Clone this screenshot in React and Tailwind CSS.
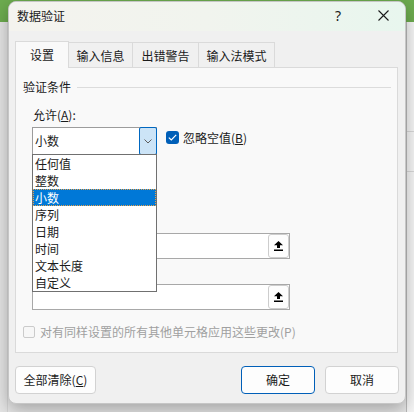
import { useState } from 'react'

const allowItems = ['任何值', '整数', '小数', '序列', '日期', '时间', '文本长度', '自定义']

// small upload/collapse button inside the range boxes
const RangeButton = () => (
  <div className="w-[21px] h-full rounded-[3px] border border-[#cdcdcd] bg-[#fdfdfd] flex items-center justify-center">
    <svg width="9" height="10" viewBox="0 0 9 10">
      <path d="M4.5 0 L9 4.2 H6 V7 H3 V4.2 H0 Z" fill="#000" />
      <rect x="0" y="8.5" width="9" height="1.5" fill="#000" />
    </svg>
  </div>
)

const RangeBox = ({ className = '' }) => (
  <div className={`ml-[16px] w-[258px] h-[26px] border border-[#a8a8a8] bg-white flex justify-end ${className}`}>
    <RangeButton />
  </div>
)

const DialogButton = ({ children, primary, className = '' }) => (
  <button
    className={`h-[28px] rounded-[4px] border bg-[#fdfdfd] text-[12px] leading-[16px] text-[#1b1b1b] flex items-center justify-center ${
      primary ? 'border-[#005fb8]' : 'border-[#d2d2d2]'
    } ${className}`}
  >
    {children}
  </button>
)

export default function App() {
  const [selected] = useState(2)
  const tabs = ['输入信息', '出错警告', '输入法模式']
  const tabWidths = ['w-[64px]', 'w-[66px]', 'w-[76px]']

  return (
    <div className="relative w-[414px] h-[412px] overflow-hidden bg-[#e9e9e9] font-['Noto_Sans_CJK_SC',sans-serif] text-[#1b1b1b]">
      {/* excel window behind the dialog */}
      <div className="h-[22px] bg-[#6dac4f]" />
      <div className="flex h-[390px]">
        <div className="w-[8px] bg-[#e6e6e6] border-r border-[#d8d8d8]" />
        <div className="flex-1" />
        <div className="w-[8px] bg-[#f7f7f7] border-l border-[#bcbcbc] flex flex-col">
          <div className="h-[110px] border-b border-[#d9d9d9]" />
          <div className="h-[40px] border-b border-[#d9d9d9]" />
        </div>
      </div>

      {/* dialog */}
      <div className="absolute left-[8px] top-[1px] w-[398px] h-[403px] rounded-[8px] border border-[#c6c6c6] bg-[#f0f0f0] shadow-[0_6px_18px_rgba(0,0,0,0.3)] overflow-hidden flex flex-col">
        <div className="h-[29px] shrink-0 flex items-center pb-[2px] bg-gradient-to-r from-[#f4f3ee] via-[#f1f4ee] to-[#e8f6ee]">
          <span className="ml-[8px] text-[12px] leading-[16px]">数据验证</span>
          <span className="ml-auto w-[20px] text-center text-[14px] leading-[16px] font-['Noto_Sans',sans-serif]">?</span>
          <div className="ml-[25px] mr-[12px] w-[20px] flex justify-center">
            <svg width="11" height="11" viewBox="0 0 11 11">
              <path d="M0.5 0.5 L10.5 10.5 M10.5 0.5 L0.5 10.5" stroke="#1b1b1b" strokeWidth="1.1" />
            </svg>
          </div>
        </div>

        {/* tabs */}
        <div className="mt-[10px] h-[26px] pl-[6px] flex items-end shrink-0">
          <div className="relative z-10 -mb-px w-[54px] h-[27px] border border-b-0 border-[#dadada] bg-[#f9f9f9] flex items-center justify-center text-[12px] leading-[16px]">
            设置
          </div>
          {tabs.map((t, i) => (
            <div
              key={t}
              className={`${tabWidths[i]} h-[25px] border-t border-r border-[#dadada] bg-[#f0f0f0] flex items-center justify-center pt-[2px] text-[12px] leading-[16px]`}
            >
              {t}
            </div>
          ))}
        </div>

        {/* settings panel */}
        <div className="ml-[6px] mr-[7px] h-[286px] shrink-0 border border-[#dadada] bg-[#f9f9f9] flex flex-col">
          <div className="mt-[11px] h-[16px] pl-[7px] flex items-center">
            <span className="text-[12px] leading-[16px]">验证条件</span>
            <div className="flex-1 h-px bg-[#dcdcdc] ml-[6px] mr-[6px]" />
          </div>

          <div className="mt-[12px] pl-[17px] h-[16px] text-[12px] leading-[16px]">
            允许(<u>A</u>):
          </div>

          <div className="mt-[4px] pl-[16px] flex items-start">
            <div className="relative w-[125px] h-[28px] border border-[#9c9c9c] bg-white flex items-center">
              <span className="flex-1 pl-[2px] text-[12px] leading-[16px]">小数</span>
              <div className="-my-px -mr-px w-[18px] h-[28px] self-start rounded-[2px] border border-[#0067c0] bg-[#cce4f7] flex items-center justify-center">
                <svg width="8" height="5" viewBox="0 0 8 5">
                  <path d="M0.5 0.5 L4 4 L7.5 0.5" stroke="#5f5f5f" strokeWidth="1" fill="none" />
                </svg>
              </div>

              {/* open dropdown list */}
              <div className="absolute left-[-1px] top-full z-20 w-[125px] border border-[#707070] bg-white">
                {allowItems.map((item, i) => (
                  <div
                    key={item}
                    className={`h-[17px] pl-[2px] text-[12px] leading-[17px] ${
                      i === selected
                        ? 'bg-[#0078d7] text-white outline-1 outline-dotted outline-[#e9a24a] -outline-offset-1'
                        : 'text-[#1b1b1b]'
                    }`}
                  >
                    {item}
                  </div>
                ))}
              </div>
            </div>

            <div className="ml-[9px] mt-[4px] h-[13px] flex items-center">
              <div className="w-[13px] h-[13px] rounded-[3px] bg-[#005fb8] flex items-center justify-center">
                <svg width="9" height="7" viewBox="0 0 9 7">
                  <path d="M0.8 3.6 L3.3 6 L8.2 0.9" stroke="#fff" strokeWidth="1.2" fill="none" />
                </svg>
              </div>
              <span className="ml-[4px] text-[12px] leading-[16px]">
                忽略空值(<u>B</u>)
              </span>
            </div>
          </div>

          <RangeBox className="mt-[78px]" />
          <RangeBox className="mt-[25px]" />

          <div className="mt-[16px] pl-[7px] h-[12px] flex items-center">
            <div className="w-[12px] h-[12px] rounded-[2px] border border-[#cbcbcb] bg-[#f7f7f7]" />
            <span className="ml-[5px] text-[12px] leading-[16px] text-[#a0a0a0]">
              对有同样设置的所有其他单元格应用这些更改(P)
            </span>
          </div>
        </div>

        {/* buttons */}
        <div className="mt-[13px] pl-[6px] pr-[6px] flex items-center">
          <DialogButton className="w-[81px]">
            全部清除(<u>C</u>)
          </DialogButton>
          <DialogButton primary className="ml-auto w-[74px]">
            确定
          </DialogButton>
          <DialogButton className="ml-[10px] w-[74px]">取消</DialogButton>
        </div>
      </div>
    </div>
  )
}
